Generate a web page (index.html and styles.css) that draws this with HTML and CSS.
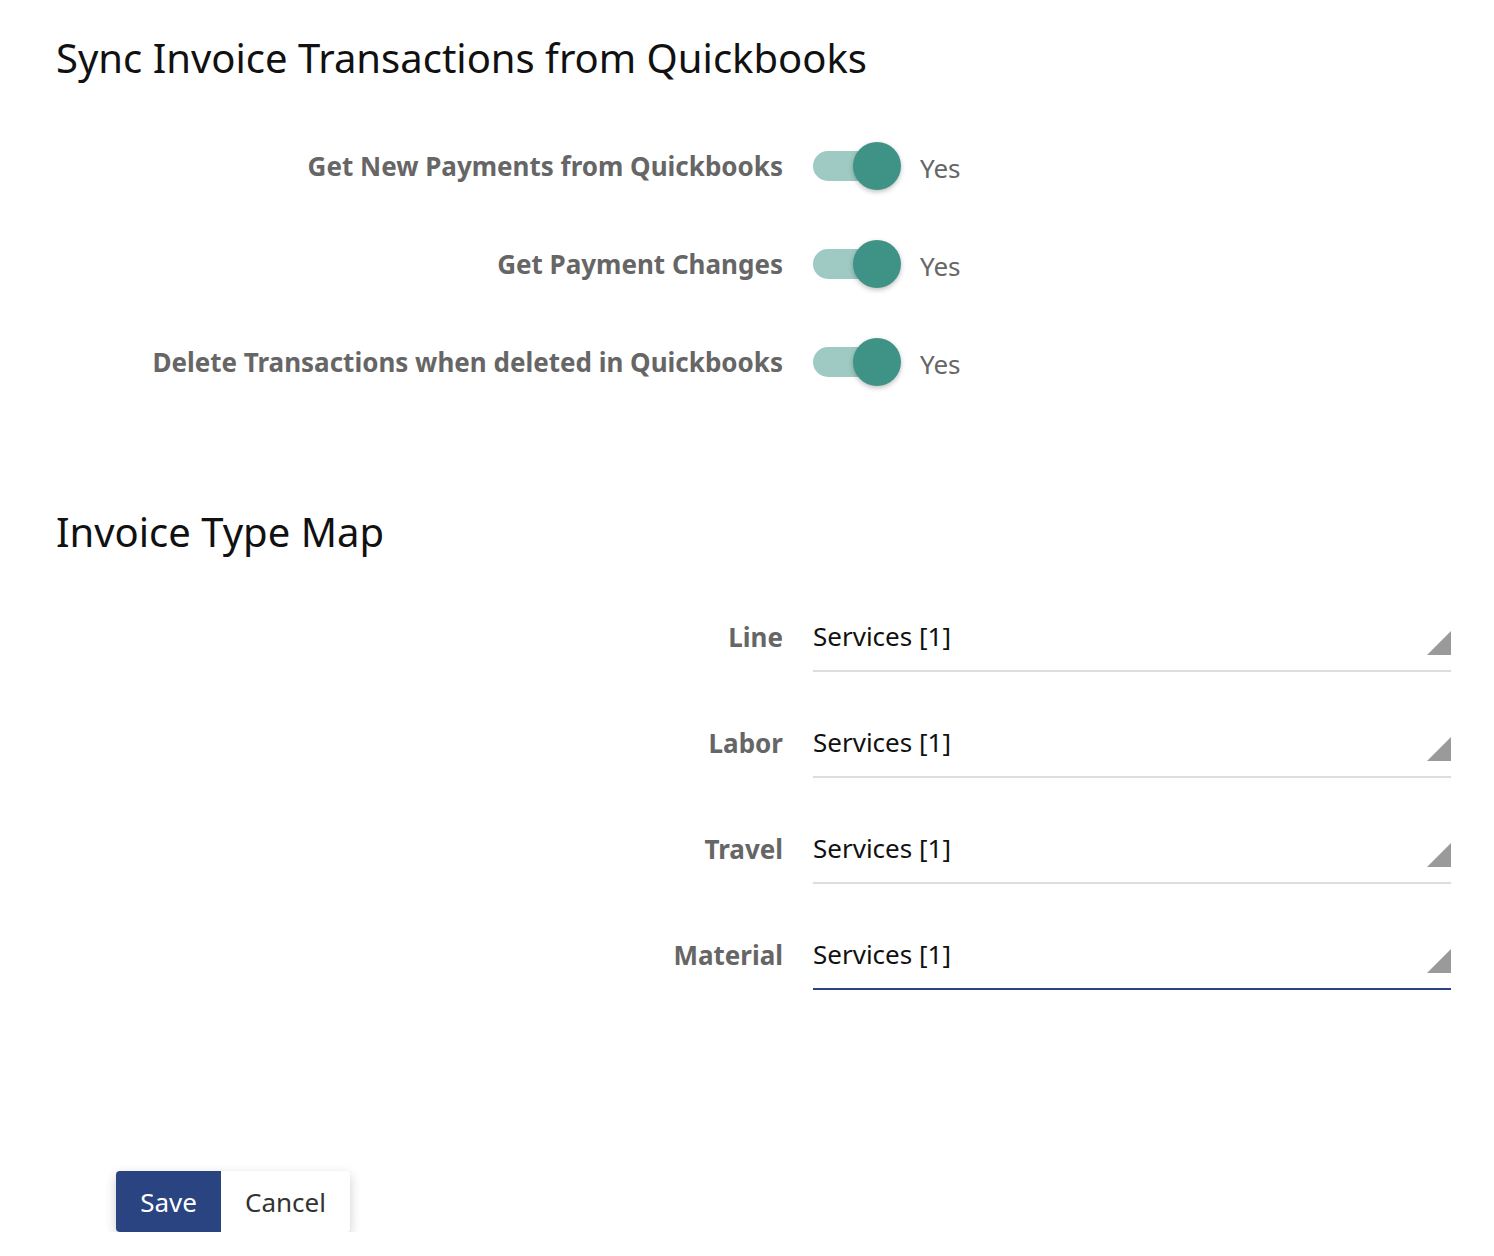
FILE: index.html
```html
<!DOCTYPE html>
<html lang="en">
<head>
  <meta charset="UTF-8">
  <title>Quickbooks Sync</title>
  <link rel="stylesheet" href="styles.css">
</head>
<body>
  <h2 class="section-title first">Sync Invoice Transactions from Quickbooks</h2>

  <div class="toggle-list">
    <div class="form-row toggle-row">
      <label class="row-label">Get New Payments from Quickbooks</label>
      <div class="switch"><span class="track"></span><span class="knob"></span></div>
      <span class="switch-text">Yes</span>
    </div>
    <div class="form-row toggle-row">
      <label class="row-label">Get Payment Changes</label>
      <div class="switch"><span class="track"></span><span class="knob"></span></div>
      <span class="switch-text">Yes</span>
    </div>
    <div class="form-row toggle-row">
      <label class="row-label">Delete Transactions when deleted in Quickbooks</label>
      <div class="switch"><span class="track"></span><span class="knob"></span></div>
      <span class="switch-text">Yes</span>
    </div>
  </div>

  <h2 class="section-title second">Invoice Type Map</h2>

  <div class="select-list">
    <div class="form-row select-row">
      <label class="row-label">Line</label>
      <div class="select-field"><span class="select-value">Services [1]</span><span class="select-arrow"></span></div>
    </div>
    <div class="form-row select-row">
      <label class="row-label">Labor</label>
      <div class="select-field"><span class="select-value">Services [1]</span><span class="select-arrow"></span></div>
    </div>
    <div class="form-row select-row">
      <label class="row-label">Travel</label>
      <div class="select-field"><span class="select-value">Services [1]</span><span class="select-arrow"></span></div>
    </div>
    <div class="form-row select-row">
      <label class="row-label">Material</label>
      <div class="select-field focused"><span class="select-value">Services [1]</span><span class="select-arrow"></span></div>
    </div>
  </div>

  <div class="actions">
    <button class="btn btn-save">Save</button>
    <button class="btn btn-cancel">Cancel</button>
  </div>
</body>
</html>
```

FILE: styles.css
```css
body {
  margin: 0;
  padding: 0 43px 0 56px;
  font-family: "Noto Sans", "Open Sans", sans-serif;
  background: white;
  color: #111;
}

.section-title {
  font-size: 40px;
  font-weight: 400;
  line-height: 56px;
  margin: 0;
  color: #111;
}

.section-title.first {
  margin-top: 30px;
}

.section-title.second {
  margin-top: 93px;
}

.form-row {
  display: flex;
  align-items: center;
}

.row-label {
  width: 727px;
  flex-shrink: 0;
  margin-right: 30px;
  text-align: right;
  font-size: 26px;
  font-weight: 700;
  color: #666;
}

/* Schalter */
.toggle-list {
  margin-top: 31px;
}

.toggle-row {
  height: 98px;
}

.switch {
  position: relative;
  width: 88px;
  height: 48px;
  margin-right: 19px;
}

.switch .track {
  position: absolute;
  left: 0;
  top: 9px;
  width: 80px;
  height: 30px;
  border-radius: 15px;
  background: #9ecac3;
}

.switch .knob {
  position: absolute;
  right: 0;
  top: 0;
  width: 48px;
  height: 48px;
  border-radius: 50%;
  background: #3f9386;
  box-shadow: 0px 2px 5px rgba(0, 0, 0, 0.25);
}

.switch-text {
  font-size: 26px;
  color: #666;
  margin-top: 4px;
}

/* Auswahlfelder */
.select-list {
  margin-top: 52px;
  display: flex;
  flex-direction: column;
  gap: 46px;
}

.select-row {
  align-items: flex-start;
}

.select-row .row-label {
  line-height: 50px;
}

.select-field {
  flex: 1;
  display: flex;
  align-items: flex-start;
  height: 58px;
  border-bottom: 2px solid #ddd;
}

.select-field.focused {
  border-bottom-color: #2c4282;
}

.select-value {
  flex: 1;
  font-size: 26px;
  line-height: 48px;
  color: #111;
}

.select-arrow {
  width: 24px;
  height: 24px;
  margin-top: 19px;
  background: #9a9a9a;
  clip-path: polygon(100% 0, 100% 100%, 0 100%);
}

/* Buttons */
.actions {
  display: inline-flex;
  margin: 181px 0 0 60px;
  border-radius: 4px;
  box-shadow: 0px 4px 12px rgba(0, 0, 0, 0.2);
}

.btn {
  height: 61px;
  border: none;
  font-family: inherit;
  font-size: 26px;
  padding: 0 24px;
  cursor: pointer;
}

.btn-save {
  width: 105px;
  background-color: #2a4381;
  color: white;
  border-radius: 4px 0 0 4px;
}

.btn-cancel {
  width: 129px;
  background-color: white;
  color: #333;
  border-radius: 0 4px 4px 0;
}
```
